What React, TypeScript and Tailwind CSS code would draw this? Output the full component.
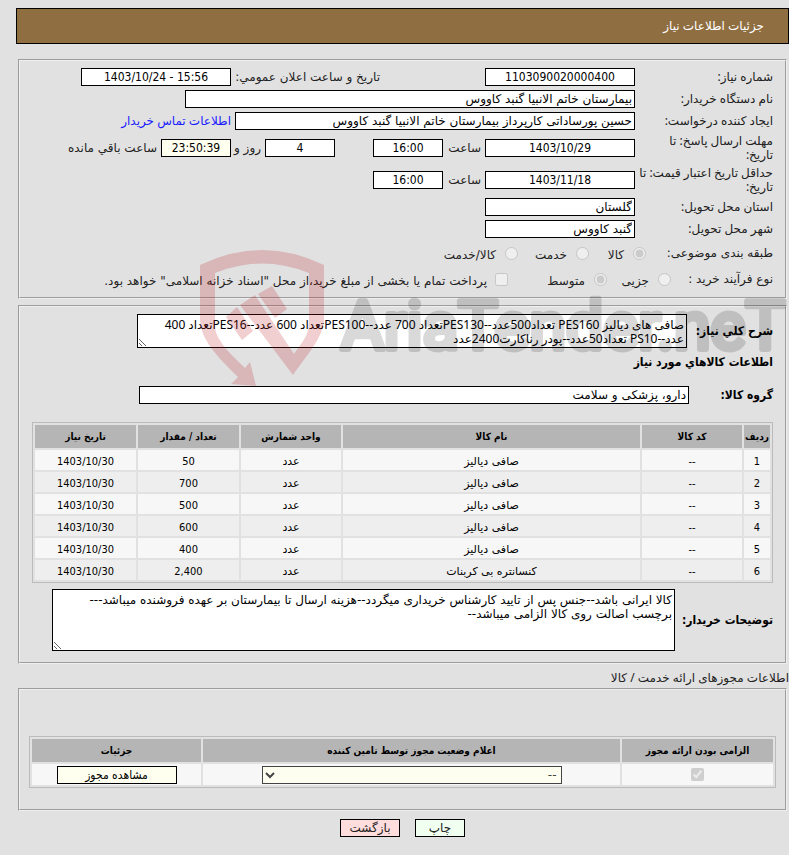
import React from 'react';

type FieldProps = {
  value: string;
  label: string;
  className?: string;
};

const Field: React.FC<FieldProps> = ({ value, label, className = 'w-[150px]' }) => (
  <input
    type="text"
    readOnly
    aria-label={label}
    defaultValue={value}
    className={`h-[18px] shrink-0 border border-black bg-white px-[2px] text-[12px] leading-4 text-black ${className}`}
  />
);

const NumberField: React.FC<FieldProps> = ({ value, label, className = 'w-[150px] bg-white' }) => (
  <input
    type="text"
    dir="ltr"
    readOnly
    aria-label={label}
    defaultValue={value}
    className={`h-[18px] shrink-0 border border-black px-[2px] text-center text-[12px] leading-4 text-black [font-family:'DejaVu_Sans_Condensed',sans-serif] ${className}`}
  />
);

const Row: React.FC<{ label: React.ReactNode; children: React.ReactNode; className?: string }> = ({
  label,
  children,
  className = 'h-[22px]',
}) => (
  <div className={`flex items-center ${className}`}>
    <span className="w-[138px] shrink-0 whitespace-nowrap [font-family:'Noto_Sans','DejaVu_Sans',sans-serif]">{label}</span>
    {children}
  </div>
);

const Panel: React.FC<{ children: React.ReactNode; className?: string }> = ({ children, className = '' }) => (
  <fieldset className={`mx-[2px] min-w-0 border-2 border-[#f0f0f0] [border-style:groove] ${className}`}>
    {children}
  </fieldset>
);

const Radio: React.FC<{ name: string; label: string; checked?: boolean; className?: string }> = ({
  name,
  label,
  checked = false,
  className = '',
}) => (
  <label className={`flex shrink-0 items-center ${className}`}>
    <input type="radio" name={name} disabled defaultChecked={checked} className="ml-[9px] size-[13px] shrink-0" />
    <span className="whitespace-nowrap pt-1">{label}</span>
  </label>
);

const items = [
  { id: 1, name: 'صافی دیالیز', count: '50' },
  { id: 2, name: 'صافی دیالیز', count: '700' },
  { id: 3, name: 'صافی دیالیز', count: '500' },
  { id: 4, name: 'صافی دیالیز', count: '600' },
  { id: 5, name: 'صافی دیالیز', count: '400' },
  { id: 6, name: 'کنسانتره بی کربنات', count: '2,400' },
];

const Watermark: React.FC = () => (
  <div className="pointer-events-none absolute left-[200px] top-[248px]" aria-hidden="true" dir="ltr">
    <svg width="589" height="142" viewBox="0 0 589 142">
      <g fill="#b80f18" opacity="0.2">
        <path d="M0 17Q62-13 124 17V70C124 88 110 103 93 127L40 57L55 47L94 106C102 94 109 88 109 74V25Q62 6 15 25V78C15 90 27 103 45 120L50 114L56 138L31 136L38 129C18 109 0 92 0 70Z" />
        <path d="M26 69L37 59L53 83L42 92Z" />
        <path d="M58 46L72 38L87 61L75 70Z" />
      </g>
      <g opacity="0.15">
        <text
          x="141"
          y="101"
          fontSize="66"
          fill="#000"
          stroke="#000"
          strokeWidth="6"
          strokeLinejoin="round"
          className="[font-family:Roboto,sans-serif]"
        >
          AriaTender.neT
        </text>
      </g>
    </svg>
  </div>
);

const App: React.FC = () => {
  return (
    <div
      dir="rtl"
      className="relative min-h-screen overflow-hidden bg-[#e1e1e1] pb-[18px] pl-4 pt-2 text-[12px] leading-[14px] text-[#222222] [font-family:'DejaVu_Sans',Tahoma,sans-serif]"
    >
      <header className="flex h-9 items-center border border-black bg-[#8f6e41] pr-6 text-white">
        <h1 className="[font-family:'Noto_Sans','DejaVu_Sans',sans-serif]">جزئیات اطلاعات نیاز</h1>
      </header>

      <main>
        <Panel className="mt-[15px] h-[240px] px-3 pt-[5px]">
          <Row label="شماره نیاز:">
            <NumberField label="شماره نیاز" value="1103090020000400" />
            <span className="mr-[105px] w-[149px] shrink-0 whitespace-nowrap">تاریخ و ساعت اعلان عمومي:</span>
            <NumberField label="تاریخ و ساعت اعلان عمومي" value="1403/10/24 - 15:56" />
          </Row>
          <Row label="نام دستگاه خریدار:">
            <Field label="نام دستگاه خریدار" value="بیمارستان خاتم الانبیا گنبد کاووس" className="w-[450px]" />
          </Row>
          <Row label="ایجاد کننده درخواست:">
            <Field
              label="ایجاد کننده درخواست"
              value="حسین پورساداتی کارپرداز بیمارستان خاتم الانبیا گنبد کاووس"
              className="w-[400px]"
            />
            <a href="#contact" className="mr-1 text-[#1a1aff] [font-family:'Noto_Sans','DejaVu_Sans',sans-serif]">
              اطلاعات تماس خریدار
            </a>
          </Row>
          <Row label={<>مهلت ارسال پاسخ: تا<br />تاریخ:</>} className="h-8">
            <NumberField label="تاریخ مهلت" value="1403/10/29" />
            <span className="w-[42px] pr-1">ساعت</span>
            <NumberField label="ساعت مهلت" value="16:00" className="w-[70px] bg-white" />
            <NumberField label="روز" value="4" className="mr-[38px] w-[70px] bg-white" />
            <span className="w-[34px] whitespace-nowrap pr-1">روز و</span>
            <NumberField label="زمان باقي مانده" value="23:50:39" className="w-[70px] bg-[#fffff0]" />
            <span className="pr-1">ساعت باقي مانده</span>
          </Row>
          <Row label={<>حداقل تاریخ اعتبار قیمت: تا<br />تاریخ:</>} className="h-8">
            <NumberField label="تاریخ اعتبار" value="1403/11/18" />
            <span className="w-[42px] pr-1">ساعت</span>
            <NumberField label="ساعت اعتبار" value="16:00" className="w-[70px] bg-white" />
          </Row>
          <Row label="استان محل تحویل:">
            <Field label="استان محل تحویل" value="گلستان" />
          </Row>
          <Row label="شهر محل تحویل:">
            <Field label="شهر محل تحویل" value="گنبد کاووس" />
          </Row>
          <div className="flex h-[26px] items-center">
            <span className="w-[127px]">طبقه بندی موضوعی:</span>
            <Radio name="kind" label="کالا" checked className="w-[57px]" />
            <Radio name="kind" label="خدمت" className="w-[71px]" />
            <Radio name="kind" label="کالا/خدمت" />
          </div>
          <div className="flex h-[26px] items-center">
            <span className="w-[102px]">نوع فرآیند خرید :</span>
            <Radio name="size" label="جزیی" className="w-[64px]" />
            <Radio name="size" label="متوسط" checked className="w-[99px]" />
            <label className="flex items-center whitespace-nowrap">
              <input type="checkbox" disabled className="ml-2 size-[13px]" />
              <span className="pt-1">پرداخت تمام یا بخشی از مبلغ خرید،از محل "اسناد خزانه اسلامی" خواهد بود.</span>
            </label>
          </div>
        </Panel>

        <Panel className="mt-[6px] px-3 pb-[11px] pt-[7px]">
          <div className="flex items-center">
            <label htmlFor="summary" className="w-[86px] shrink-0 whitespace-nowrap font-bold text-black [font-family:'DejaVu_Sans_Condensed',sans-serif]">
              شرح كلي نياز:
            </label>
            <textarea
              id="summary"
              readOnly
              className="block h-[34px] w-[550px] border border-black bg-white px-[2px] py-[3px] text-black [font-family:'Noto_Sans','DejaVu_Sans',sans-serif]"
              defaultValue={'صافی های دیالیز PES160 تعداد500عدد--PES130تعداد 700 عدد--PES100تعداد 600 عدد--PES16تعداد 400\nعدد--PS10 تعداد50عدد--پودر رناکارت2400عدد'}
            />
          </div>
          <h2 className="mt-[7px] font-bold text-black [font-family:'DejaVu_Sans_Condensed',sans-serif]">اطلاعات كالاهاي مورد نياز</h2>
          <div className="mt-[17px] flex items-center">
            <span className="w-[84px] shrink-0 font-bold text-black [font-family:'DejaVu_Sans_Condensed',sans-serif]">گروه كالا:</span>
            <Field label="گروه كالا" value="دارو، پزشکی و سلامت" className="w-[550px]" />
          </div>

          <table className="mt-[18px] w-full table-fixed border-separate border-spacing-[2px] border border-[#bbbbbb] text-center text-[11px] text-black">
            <thead className="text-[10px] [font-family:'DejaVu_Sans_Condensed',sans-serif]">
              <tr className="h-[23px] bg-[#b5b5b5]">
                <th className="w-[26px] whitespace-nowrap">ردیف</th>
                <th className="w-[100px]">کد کالا</th>
                <th>نام کالا</th>
                <th className="w-[100px]">واحد شمارش</th>
                <th className="w-[101px]">تعداد / مقدار</th>
                <th className="w-[101px]">تاریخ نیاز</th>
              </tr>
            </thead>
            <tbody>
              {items.map((item) => (
                <tr key={item.id} className="h-5 odd:bg-[#f7f7f7] even:bg-[#eeeeee]">
                  <td className="pt-[3px] [font-family:'DejaVu_Sans_Condensed',sans-serif]">{item.id}</td>
                  <td className="pt-[3px] [font-family:'DejaVu_Sans_Condensed',sans-serif]">--</td>
                  <td className="pt-[3px]">{item.name}</td>
                  <td className="pt-[3px]">عدد</td>
                  <td className="pt-[3px] [font-family:'DejaVu_Sans_Condensed',sans-serif]">{item.count}</td>
                  <td className="pt-[3px] [font-family:'DejaVu_Sans_Condensed',sans-serif]">1403/10/30</td>
                </tr>
              ))}
            </tbody>
          </table>

          <div className="mt-[6px] flex items-center">
            <label htmlFor="notes" className="w-[98px] shrink-0 whitespace-nowrap font-bold text-black [font-family:'DejaVu_Sans_Condensed',sans-serif]">
              توضیحات خریدار:
            </label>
            <textarea
              id="notes"
              readOnly
              className="block h-[62px] w-[623px] border border-black bg-white px-[2px] py-[3px] text-black"
              defaultValue={'کالا ایرانی باشد--جنس پس از تایید کارشناس خریداری میگردد--هزینه ارسال تا بیمارستان بر عهده فروشنده میباشد---\nبرچسب اصالت روی کالا الزامی میباشد--'}
            />
          </div>
        </Panel>

        <h2 className="mt-[7px] [font-family:'Noto_Sans','DejaVu_Sans',sans-serif]">اطلاعات مجوزهای ارائه خدمت / کالا</h2>

        <Panel className="mt-[3px] px-[9px] pb-[21px] pt-[46px]">
          <table className="w-full table-fixed border-separate border-spacing-[2px] border border-[#bbbbbb] text-center text-[11px] text-black">
            <thead className="text-[10px] [font-family:'DejaVu_Sans_Condensed',sans-serif]">
              <tr className="h-[23px] bg-[#b5b5b5]">
                <th className="w-[151px]">الزامی بودن ارائه مجوز</th>
                <th>اعلام وضعیت مجوز توسط تامین کننده</th>
                <th className="w-[169px]">جزئیات</th>
              </tr>
            </thead>
            <tbody>
              <tr className="h-[21px] bg-[#f7f7f7]">
                <td>
                  <input type="checkbox" aria-label="الزامی" disabled defaultChecked className="mx-auto block size-[13px]" />
                </td>
                <td>
                  <select aria-label="وضعیت مجوز" className="mx-auto block h-[18px] w-[300px] border border-[#444444] bg-[#fdfdf0] text-[12px] leading-[14px] text-[#444444]">
                    <option>--</option>
                  </select>
                </td>
                <td>
                  <button type="button" className="mx-auto block h-[18px] w-[120px] border border-black bg-[#fffff0] text-[12px] leading-4 [font-family:'DejaVu_Sans_Condensed',sans-serif]">
                    مشاهده مجوز
                  </button>
                </td>
              </tr>
            </tbody>
          </table>
        </Panel>
      </main>

      <footer className="mt-2 flex justify-center gap-[15px]">
        <button type="button" className="h-[18px] w-[50px] border border-black bg-[#f0fff0] leading-4">چاپ</button>
        <button type="button" className="h-[18px] w-[60px] border border-black bg-[#ffdddd] leading-4">بازگشت</button>
      </footer>

      <Watermark />
    </div>
  );
};

export default App;
